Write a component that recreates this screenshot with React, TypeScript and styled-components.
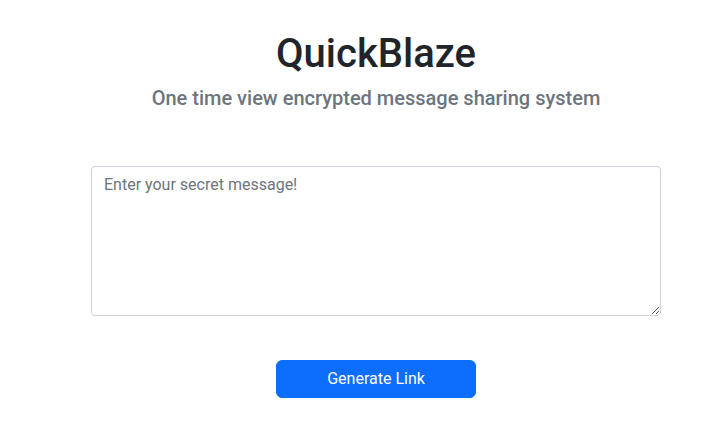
import React from "react";
import styled, { createGlobalStyle } from "styled-components";

const Global = createGlobalStyle`
  html, body { margin: 0; padding: 0; background: #fff; }
  body { font-family: Roboto, "Liberation Sans", sans-serif; color: #212529; }
  * { box-sizing: border-box; }
`;

const Page = styled.main`
  width: 718px;
  padding: 30px 57px 0 91px;
  display: flex;
  flex-direction: column;
  align-items: center;
`;

const Title = styled.h1`
  margin: 0;
  font-size: 40px;
  font-weight: 500;
  line-height: 1.2;
  color: #212529;
`;

const Subtitle = styled.h5`
  margin: 8px 0 0;
  font-size: 20px;
  font-weight: 500;
  line-height: 1.2;
  color: #6c757d;
`;

const Form = styled.form`
  width: 100%;
  margin-top: 56px;
  display: flex;
  flex-direction: column;
  align-items: center;
  gap: 44px;
`;

const Message = styled.textarea`
  width: 100%;
  height: 150px;
  padding: 6px 12px;
  border: 1px solid #ced4da;
  border-radius: 4px;
  font-family: Roboto, "Liberation Sans", sans-serif;
  font-size: 16px;
  line-height: 1.5;
  color: #212529;
  resize: vertical;
  outline: none;
  &::placeholder { color: #6c757d; opacity: 1; }
`;

const Button = styled.button`
  width: 200px;
  height: 38px;
  border: 1px solid #0d6efd;
  border-radius: 6px;
  background: #0d6efd;
  color: #fff;
  font-family: Roboto, "Liberation Sans", sans-serif;
  font-size: 16px;
  line-height: 1.5;
  cursor: pointer;
`;

export default function App() {
  return (
    <>
      <Global />
      <Page>
        <Title>QuickBlaze</Title>
        <Subtitle>One time view encrypted message sharing system</Subtitle>
        <Form onSubmit={(e) => e.preventDefault()}>
          <Message placeholder="Enter your secret message!" />
          <Button type="submit">Generate Link</Button>
        </Form>
      </Page>
    </>
  );
}
